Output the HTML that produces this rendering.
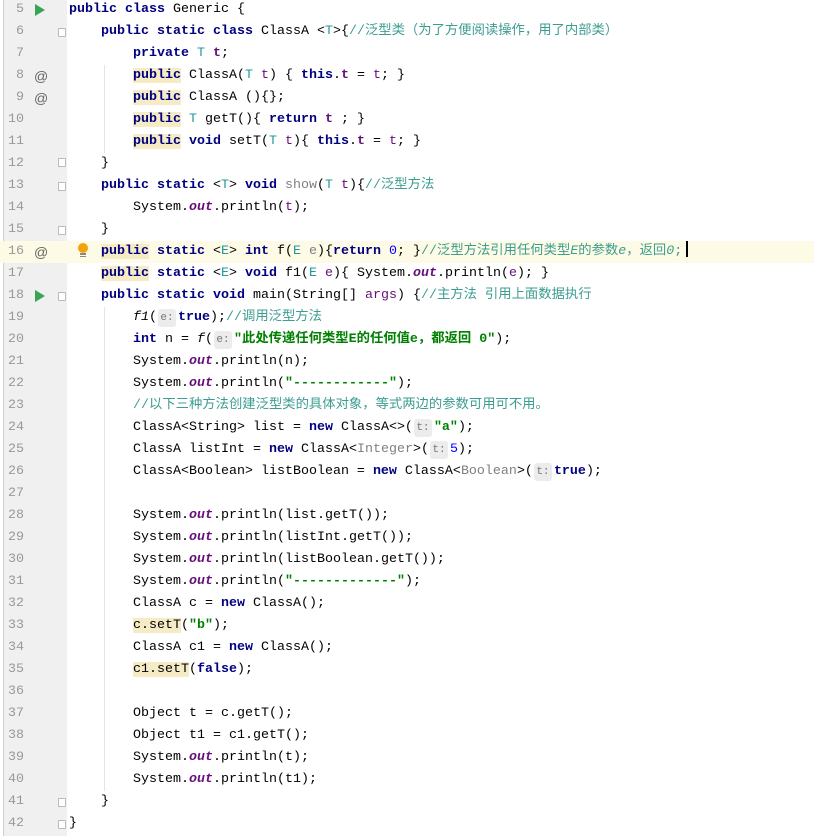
<!DOCTYPE html>
<html><head><meta charset="utf-8"><style>
html,body{margin:0;padding:0;background:#fff;width:814px;height:836px;overflow:hidden;position:relative}
.gut{position:absolute;left:3px;top:0;width:63px;height:836px;background:#f0f0f0;border-left:1px solid #cfcfcf}
.ln{position:absolute;left:0;height:22px;font:13.33px "Liberation Mono","DejaVu Sans Mono",monospace;line-height:22px;color:#999;width:24px;text-align:right}
.row{position:absolute;left:69px;height:22px;white-space:pre;font:13.33px "Liberation Mono","Noto Sans CJK SC",monospace;line-height:22px;color:#000}
.row span{line-height:22px}
.hl{position:absolute;left:0;width:814px;height:22px;background:#fdfbe5}
.k{color:#000080;font-weight:bold}
.tp{color:#20999d}
.f{color:#660e7a;font-weight:bold}
.p{color:#660e7a}
.c{color:#3c9d91}
.s{color:#008000;font-weight:bold}
.n{color:#0000ff}
.o{color:#660e7a;font-weight:bold;font-style:italic}
.i{font-style:italic}
.g{color:#808080}
.u{background:#f5ebc5}
.row .h{display:inline-block;width:18px;height:18px;line-height:18px;background:#ececec;color:#777;border-radius:3px;font-size:11px;text-align:center;margin:0 2px 0 1px;vertical-align:top;margin-top:2px}
.guide{position:absolute;width:1px;background:#e4e4e4}
.fold{position:absolute;left:58px;width:8px;height:9px;border:1px solid #bbb;background:#fff;box-sizing:border-box;border-radius:1px}
.run{position:absolute;left:35px;width:0;height:0;border-left:10px solid #3aa355;border-top:6px solid transparent;border-bottom:6px solid transparent}
.at{position:absolute;left:34px;font:14px "Liberation Sans",sans-serif;line-height:22px;color:#666}
</style></head><body>
<div class="gut"></div>
<div class="hl" style="top:241px"></div>
<div class="guide" style="left:104px;top:65px;height:88px"></div>
<div class="guide" style="left:104px;top:307px;height:484px"></div>

<div class="run" style="top:4px"></div>
<div class="run" style="top:290px"></div>
<div class="at" style="top:65px">@</div>
<div class="at" style="top:87px">@</div>
<div class="at" style="top:241px">@</div>
<div style="position:absolute;left:78px;top:243px;width:10px;height:10px;border-radius:50%;background:#f2a20c"></div>
<div style="position:absolute;left:80px;top:253px;width:6px;height:2px;background:#888"></div>
<div style="position:absolute;left:80px;top:256px;width:6px;height:1px;background:#888"></div>

<div class="fold" style="top:28px"></div>
<div class="fold" style="top:158px"></div>
<div class="fold" style="top:182px"></div>
<div class="fold" style="top:226px"></div>
<div class="fold" style="top:292px"></div>
<div class="fold" style="top:798px"></div>
<div class="fold" style="top:820px"></div>

<div class="ln" style="top:-1px">5</div>
<div class="ln" style="top:21px">6</div>
<div class="ln" style="top:43px">7</div>
<div class="ln" style="top:65px">8</div>
<div class="ln" style="top:87px">9</div>
<div class="ln" style="top:109px">10</div>
<div class="ln" style="top:131px">11</div>
<div class="ln" style="top:153px">12</div>
<div class="ln" style="top:175px">13</div>
<div class="ln" style="top:197px">14</div>
<div class="ln" style="top:219px">15</div>
<div class="ln" style="top:241px">16</div>
<div class="ln" style="top:263px">17</div>
<div class="ln" style="top:285px">18</div>
<div class="ln" style="top:307px">19</div>
<div class="ln" style="top:329px">20</div>
<div class="ln" style="top:351px">21</div>
<div class="ln" style="top:373px">22</div>
<div class="ln" style="top:395px">23</div>
<div class="ln" style="top:417px">24</div>
<div class="ln" style="top:439px">25</div>
<div class="ln" style="top:461px">26</div>
<div class="ln" style="top:483px">27</div>
<div class="ln" style="top:505px">28</div>
<div class="ln" style="top:527px">29</div>
<div class="ln" style="top:549px">30</div>
<div class="ln" style="top:571px">31</div>
<div class="ln" style="top:593px">32</div>
<div class="ln" style="top:615px">33</div>
<div class="ln" style="top:637px">34</div>
<div class="ln" style="top:659px">35</div>
<div class="ln" style="top:681px">36</div>
<div class="ln" style="top:703px">37</div>
<div class="ln" style="top:725px">38</div>
<div class="ln" style="top:747px">39</div>
<div class="ln" style="top:769px">40</div>
<div class="ln" style="top:791px">41</div>
<div class="ln" style="top:813px">42</div>

<div class="row" style="top:-1px"><span class="k">public class</span> Generic {</div>
<div class="row" style="top:21px">    <span class="k">public static class</span> ClassA &lt;<span class="tp">T</span>&gt;{<span class="c">//泛型类（为了方便阅读操作，用了内部类）</span></div>
<div class="row" style="top:43px">        <span class="k">private</span> <span class="tp">T</span> <span class="f">t</span>;</div>
<div class="row" style="top:65px">        <span class="k u">public</span> ClassA(<span class="tp">T</span> <span class="p">t</span>) { <span class="k">this</span>.<span class="f">t</span> = <span class="p">t</span>; }</div>
<div class="row" style="top:87px">        <span class="k u">public</span> ClassA (){};</div>
<div class="row" style="top:109px">        <span class="k u">public</span> <span class="tp">T</span> getT(){ <span class="k">return</span> <span class="f">t</span> ; }</div>
<div class="row" style="top:131px">        <span class="k u">public</span> <span class="k">void</span> setT(<span class="tp">T</span> <span class="p">t</span>){ <span class="k">this</span>.<span class="f">t</span> = <span class="p">t</span>; }</div>
<div class="row" style="top:153px">    }</div>
<div class="row" style="top:175px">    <span class="k">public static</span> &lt;<span class="tp">T</span>&gt; <span class="k">void</span> <span class="g">show</span>(<span class="tp">T</span> <span class="p">t</span>){<span class="c">//泛型方法</span></div>
<div class="row" style="top:197px">        System.<span class="o">out</span>.println(<span class="p">t</span>);</div>
<div class="row" style="top:219px">    }</div>
<div class="row" style="top:241px">    <span class="k u">public</span> <span class="k">static</span> &lt;<span class="tp">E</span>&gt; <span class="k">int</span> f(<span class="tp">E</span> <span class="g">e</span>){<span class="k">return</span> <span class="n">0</span>; }<span class="c">//泛型方法引用任何类型<i>E</i>的参数<i>e</i>，返回<i>0</i>;</span><span style="display:inline-block;width:2px;height:16px;background:#000;vertical-align:-3px;margin-left:4px"></span></div>
<div class="row" style="top:263px">    <span class="k u">public</span> <span class="k">static</span> &lt;<span class="tp">E</span>&gt; <span class="k">void</span> f1(<span class="tp">E</span> <span class="p">e</span>){ System.<span class="o">out</span>.println(<span class="p">e</span>); }</div>
<div class="row" style="top:285px">    <span class="k">public static void</span> main(String[] <span class="p">args</span>) {<span class="c">//主方法 引用上面数据执行</span></div>
<div class="row" style="top:307px">        <span class="i">f1</span>(<span class="h">e:</span><span class="k">true</span>);<span class="c">//调用泛型方法</span></div>
<div class="row" style="top:329px">        <span class="k">int</span> n = <span class="i">f</span>(<span class="h">e:</span><span class="s">"此处传递任何类型E的任何值e，都返回 0"</span>);</div>
<div class="row" style="top:351px">        System.<span class="o">out</span>.println(n);</div>
<div class="row" style="top:373px">        System.<span class="o">out</span>.println(<span class="s">"------------"</span>);</div>
<div class="row" style="top:395px">        <span class="c">//以下三种方法创建泛型类的具体对象，等式两边的参数可用可不用。</span></div>
<div class="row" style="top:417px">        ClassA&lt;String&gt; list = <span class="k">new</span> ClassA&lt;&gt;(<span class="h">t:</span><span class="s">"a"</span>);</div>
<div class="row" style="top:439px">        ClassA listInt = <span class="k">new</span> ClassA&lt;<span class="g">Integer</span>&gt;(<span class="h">t:</span><span class="n">5</span>);</div>
<div class="row" style="top:461px">        ClassA&lt;Boolean&gt; listBoolean = <span class="k">new</span> ClassA&lt;<span class="g">Boolean</span>&gt;(<span class="h">t:</span><span class="k">true</span>);</div>
<div class="row" style="top:505px">        System.<span class="o">out</span>.println(list.getT());</div>
<div class="row" style="top:527px">        System.<span class="o">out</span>.println(listInt.getT());</div>
<div class="row" style="top:549px">        System.<span class="o">out</span>.println(listBoolean.getT());</div>
<div class="row" style="top:571px">        System.<span class="o">out</span>.println(<span class="s">"-------------"</span>);</div>
<div class="row" style="top:593px">        ClassA c = <span class="k">new</span> ClassA();</div>
<div class="row" style="top:615px">        <span class="u">c.setT</span>(<span class="s">"b"</span>);</div>
<div class="row" style="top:637px">        ClassA c1 = <span class="k">new</span> ClassA();</div>
<div class="row" style="top:659px">        <span class="u">c1.setT</span>(<span class="k">false</span>);</div>
<div class="row" style="top:703px">        Object t = c.getT();</div>
<div class="row" style="top:725px">        Object t1 = c1.getT();</div>
<div class="row" style="top:747px">        System.<span class="o">out</span>.println(t);</div>
<div class="row" style="top:769px">        System.<span class="o">out</span>.println(t1);</div>
<div class="row" style="top:791px">    }</div>
<div class="row" style="top:813px">}</div>
</body></html>
